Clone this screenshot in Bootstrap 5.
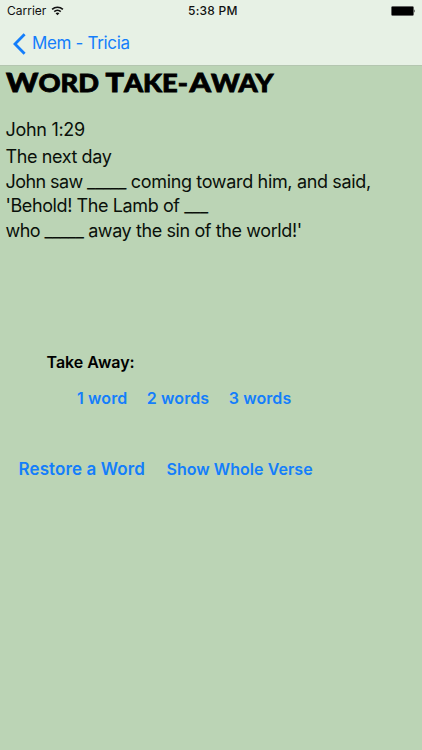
<!DOCTYPE html>
<html lang="en">
<head>
<meta charset="utf-8">
<meta name="viewport" content="width=device-width, initial-scale=1">
<title>Word Take-Away</title>
<link href="https://cdn.jsdelivr.net/npm/bootstrap@5.3.0/dist/css/bootstrap.min.css" rel="stylesheet">
<style>
body{font-family:Inter,"Liberation Sans",sans-serif;background:#bbd4b5;color:#0a100a;height:750px;overflow:hidden}
.top-area{background:#e7f1e5;height:66px;border-bottom:1px solid #b4c6b0}
.status{height:22px;font-size:12px;line-height:22px;color:#111}
.carrier{width:181px;padding-left:7px}
.carrier svg{margin-left:5px}
.clock{font-weight:500;letter-spacing:.25px;padding-left:7px}
.battery{margin-right:6px}
.back{height:43px;padding-left:13px;color:#147efb;font-size:17px;letter-spacing:-.33px}
.back svg{margin-right:6px}
.screen-title{font:900 24px/31px Lato,sans-serif;color:#000;width:240px;height:32px;margin-left:6px;white-space:nowrap;transform-origin:0 50%;transform:scaleX(1.135);-webkit-text-stroke:.8px #000}
.screen-title b{font-size:27px;font-weight:900}
.dash{letter-spacing:1.5px}
.verse{padding-left:5.5px;font-size:18px;line-height:24.5px;letter-spacing:-.4px;white-space:nowrap}
.reference{height:27px;margin-top:20px;letter-spacing:-.3px}
.lead-in{letter-spacing:-.58px}
.after-blank{letter-spacing:-.34px}
.take-label{margin:106.5px 0 0 46.5px;font-size:16px;font-weight:600;line-height:24px;color:#000}
.action{font-size:16px;font-weight:600;line-height:24px;letter-spacing:.1px;color:#147efb;border:0;white-space:nowrap}
.counts{margin:12px 0 0 77px;gap:19.5px}
.tools{margin:47px 0 0 18.5px;gap:21.5px}
.restore{font-size:17px}
.whole{letter-spacing:.05px}
</style>
<script src="https://cdn.jsdelivr.net/npm/bootstrap@5.3.0/dist/js/bootstrap.bundle.min.js"></script>
</head>
<body>
<header class="top-area">
  <div class="status d-flex align-items-center">
    <div class="carrier d-flex align-items-center"><span>Carrier</span>
      <svg width="13" height="12" viewBox="0 0 14 12"><g fill="none" stroke="#111" stroke-width="1.7"><path d="M1.2 4.3C4.5 1.1 9.5 1.1 12.8 4.3"/><path d="M3.5 6.7C5.5 4.8 8.5 4.8 10.5 6.7"/></g><path d="M7 10.6 4.9 8.4Q7 6.8 9.1 8.4Z" fill="#111"/></svg>
    </div>
    <span class="clock">5:38 PM</span>
    <svg class="battery ms-auto" width="25" height="10" viewBox="0 0 25 10"><rect x=".5" y=".5" width="22" height="9" rx="1" fill="#000" stroke="#555" stroke-width=".6"/><path d="M23.4 3.2q1.3 1.8 0 3.6z" fill="#111"/></svg>
  </div>
  <a href="#" class="back d-flex align-items-center text-decoration-none"><svg width="13" height="22" viewBox="0 0 13 22"><path d="M11.6 1.3 2 11l9.6 9.7" fill="none" stroke="#147efb" stroke-width="2.8"/></svg><span>Mem - Tricia</span></a>
</header>
<main>
  <h1 class="screen-title mb-0"><b>W</b>ORD <b>T</b>AKE<span class="dash">-</span><b>A</b>WAY</h1>
  <section class="verse">
    <div class="reference"><span>John 1:29</span></div>
    <div><span>The next day</span></div>
    <div><span class="lead-in">John saw </span><span>_____ </span><span class="after-blank">coming toward him, and said,</span></div>
    <div><span>'Behold! The Lamb of ___</span></div>
    <div><span class="lead-in">who </span><span>_____ away the sin of the world!'</span></div>
  </section>
  <div class="take-label">Take Away:</div>
  <div class="counts d-flex">
    <button class="action btn p-0">1 word</button>
    <button class="action btn p-0">2 words</button>
    <button class="action btn p-0">3 words</button>
  </div>
  <div class="tools d-flex">
    <button class="action restore btn p-0">Restore a Word</button>
    <button class="action whole btn p-0">Show Whole Verse</button>
  </div>
</main>
</body>
</html>
